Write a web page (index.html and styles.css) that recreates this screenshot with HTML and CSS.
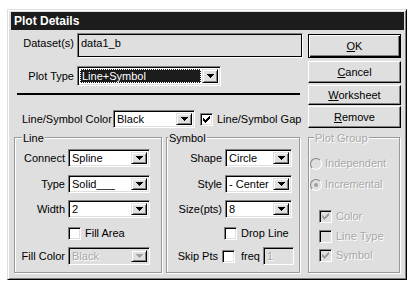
FILE: index.html
```html
<!DOCTYPE html>
<html>
<head>
<meta charset="utf-8">
<title>Plot Details</title>
<link rel="stylesheet" href="styles.css">
</head>
<body>
<div class="window">
  <div class="titlebar">Plot Details</div>
  <div class="top">
    <div class="left">
      <div class="row row-dataset">
        <span class="lbl-main lbl-ds">Dataset(s)</span>
        <div class="static">data1_b</div>
      </div>
      <div class="row row-plottype">
        <span class="lbl-main">Plot Type</span>
        <div class="combo combo-plottype">
          <div class="combo-text selected">Line+Symbol</div>
          <div class="arrow"><svg width="7" height="4" viewBox="0 0 7 4"><path d="M0 0h7v1h-1v1h-1v1h-1v1h-1v-1h-1v-1h-1v-1h-1z"/></svg></div>
        </div>
      </div>
      <div class="sep"></div>
      <div class="row row-color">
        <span class="lbl-color">Line/Symbol Color</span>
        <div class="combo combo-color">
          <div class="combo-text">Black</div>
          <div class="arrow"><svg width="7" height="4" viewBox="0 0 7 4"><path d="M0 0h7v1h-1v1h-1v1h-1v1h-1v-1h-1v-1h-1v-1h-1z"/></svg></div>
        </div>
        <span class="check checked gap-check"><svg width="7" height="7" viewBox="0 0 7 7"><path d="M0 2L2 4L6 0H7V2L2 7L0 5Z"/></svg></span>
        <span class="check-label">Line/Symbol Gap</span>
      </div>
    </div>
    <div class="buttons">
      <div class="btn btn-default btn-ok"><span><u>O</u>K</span></div>
      <div class="btn btn-cancel"><span><u>C</u>ancel</span></div>
      <div class="btn btn-ws"><span><u>W</u>orksheet</span></div>
      <div class="btn btn-remove"><span><u>R</u>emove</span></div>
    </div>
  </div>

  <div class="groups">
    <div class="group g-line">
      <div class="gtitle gt-line">Line</div>
      <div class="frow r-first">
        <span class="flbl">Connect</span>
        <div class="combo combo-l">
          <div class="combo-text">Spline</div>
          <div class="arrow"><svg width="7" height="4" viewBox="0 0 7 4"><path d="M0 0h7v1h-1v1h-1v1h-1v1h-1v-1h-1v-1h-1v-1h-1z"/></svg></div>
        </div>
      </div>
      <div class="frow r-second">
        <span class="flbl">Type</span>
        <div class="combo combo-l">
          <div class="combo-text">Solid___</div>
          <div class="arrow"><svg width="7" height="4" viewBox="0 0 7 4"><path d="M0 0h7v1h-1v1h-1v1h-1v1h-1v-1h-1v-1h-1v-1h-1z"/></svg></div>
        </div>
      </div>
      <div class="frow r-third">
        <span class="flbl">Width</span>
        <div class="combo combo-l">
          <div class="combo-text">2</div>
          <div class="arrow"><svg width="7" height="4" viewBox="0 0 7 4"><path d="M0 0h7v1h-1v1h-1v1h-1v1h-1v-1h-1v-1h-1v-1h-1z"/></svg></div>
        </div>
      </div>
      <div class="crow r-check fill-area">
        <span class="check"></span>
        <span class="check-label">Fill Area</span>
      </div>
      <div class="frow r-last">
        <span class="flbl">Fill Color</span>
        <div class="combo combo-l disabled">
          <div class="combo-text">Black</div>
          <div class="arrow"><svg width="7" height="4" viewBox="0 0 7 4"><path d="M0 0h7v1h-1v1h-1v1h-1v1h-1v-1h-1v-1h-1v-1h-1z"/></svg></div>
        </div>
      </div>
    </div>

    <div class="group g-symbol">
      <div class="gtitle gt-symbol">Symbol</div>
      <div class="frow r-first">
        <span class="flbl slbl">Shape</span>
        <div class="combo combo-s">
          <div class="combo-text">Circle</div>
          <div class="arrow"><svg width="7" height="4" viewBox="0 0 7 4"><path d="M0 0h7v1h-1v1h-1v1h-1v1h-1v-1h-1v-1h-1v-1h-1z"/></svg></div>
        </div>
      </div>
      <div class="frow r-second">
        <span class="flbl slbl">Style</span>
        <div class="combo combo-s">
          <div class="combo-text">- Center</div>
          <div class="arrow"><svg width="7" height="4" viewBox="0 0 7 4"><path d="M0 0h7v1h-1v1h-1v1h-1v1h-1v-1h-1v-1h-1v-1h-1z"/></svg></div>
        </div>
      </div>
      <div class="frow r-third">
        <span class="flbl slbl">Size(pts)</span>
        <div class="combo combo-s">
          <div class="combo-text">8</div>
          <div class="arrow"><svg width="7" height="4" viewBox="0 0 7 4"><path d="M0 0h7v1h-1v1h-1v1h-1v1h-1v-1h-1v-1h-1v-1h-1z"/></svg></div>
        </div>
      </div>
      <div class="crow r-check drop-line">
        <span class="check"></span>
        <span class="check-label">Drop Line</span>
      </div>
      <div class="frow r-last">
        <span class="skip-lbl">Skip Pts</span>
        <span class="check skip-check"></span>
        <span class="freq-lbl">freq</span>
        <div class="field disabled">1</div>
      </div>
    </div>

    <div class="group g-plot">
      <div class="gtitle gt-plot dis-text">Plot Group</div>
      <div class="crow radio-row r-indep">
        <span class="radio"></span>
        <span class="radio-label dis-text">Independent</span>
      </div>
      <div class="crow radio-row r-incr">
        <span class="radio on"></span>
        <span class="radio-label dis-text">Incremental</span>
      </div>
      <div class="crow pg-check pg-color">
        <span class="check checked dis"><svg width="7" height="7" viewBox="0 0 7 7"><path d="M0 2L2 4L6 0H7V2L2 7L0 5Z"/></svg></span>
        <span class="check-label dis-text">Color</span>
      </div>
      <div class="crow pg-check pg-ltype">
        <span class="check dis"></span>
        <span class="check-label dis-text">Line Type</span>
      </div>
      <div class="crow pg-check pg-symbol">
        <span class="check checked dis"><svg width="7" height="7" viewBox="0 0 7 7"><path d="M0 2L2 4L6 0H7V2L2 7L0 5Z"/></svg></span>
        <span class="check-label dis-text">Symbol</span>
      </div>
    </div>
  </div>
</div>
</body>
</html>
```

FILE: styles.css
```css
* { box-sizing: border-box; }

body {
  margin: 0;
  padding: 9px 0 0 7px;
  background: #fff;
  font-family: "Liberation Sans", Arial, sans-serif;
  font-size: 11px;
  line-height: 13px;
  color: #000;
}

.window {
  width: 400px;
  height: 271px;
  background: #dfdfdf;
  border: 1px solid;
  border-color: #dfdfdf #000 #000 #dfdfdf;
  box-shadow: inset 1px 1px 0 #fff, inset -1px -1px 0 #808080;
  padding: 2px 2px 0 3px;
}

.titlebar {
  height: 18px;
  background: #1c1c1c;
  color: #fff;
  font-weight: bold;
  font-size: 12px;
  line-height: 18px;
  padding-left: 3px;
}

.top {
  display: flex;
  align-items: flex-start;
}

.left {
  margin-left: 3px;
  width: 289px;
}

.row {
  display: flex;
  align-items: center;
}

.row-dataset {
  margin-top: 3px;
  height: 25px;
  align-items: flex-start;
}

.lbl-main {
  width: 60px;
  margin-right: 3px;
  text-align: right;
  white-space: nowrap;
}

.lbl-ds { padding-top: 4px; }

.static {
  width: 226px;
  height: 25px;
  border: 1px solid;
  border-color: #808080 #fff #fff #808080;
  box-shadow: inset 0 0 0 1px #000;
  padding: 3px 0 0 3px;
}

.row-plottype {
  margin-top: 8px;
  height: 20px;
}

.combo {
  display: flex;
  height: 18px;
  border: 1px solid;
  border-color: #808080 #fff #fff #808080;
  box-shadow: inset 1px 1px 0 #000, inset -1px -1px 0 #dfdfdf;
  background: #fff;
  padding: 2px;
}

.combo-text {
  flex: 1;
  display: flex;
  align-items: center;
  padding-left: 1px;
  white-space: nowrap;
  overflow: hidden;
}

.combo-plottype {
  width: 144px;
  height: 20px;
}

.combo-text.selected {
  background: #1c1c1c;
  color: #fff;
  outline: 1px dotted #fff;
  outline-offset: -1px;
  padding-left: 2px;
  margin-right: 1px;
}

.arrow {
  width: 16px;
  display: flex;
  align-items: center;
  justify-content: center;
  background: #dfdfdf;
  border: 1px solid;
  border-color: #dfdfdf #000 #000 #dfdfdf;
  box-shadow: inset 1px 1px 0 #fff, inset -1px -1px 0 #808080;
}

.arrow svg { display: block; fill: #000; shape-rendering: crispEdges; }

.combo.disabled { background: #dfdfdf; }
.combo.disabled .combo-text { color: #a8a8a8; text-shadow: 1px 1px 0 #fff; }
.combo.disabled .arrow svg { fill: #a0a0a0; }

.sep {
  margin: 7px 0 0 3px;
  width: 283px;
  height: 2px;
  background: #000;
}

.row-color {
  margin-top: 15px;
  height: 18px;
  padding-left: 8px;
}

.lbl-color {
  width: 91px;
  white-space: nowrap;
}

.combo-color { width: 82px; }

.check {
  width: 13px;
  height: 13px;
  flex: none;
  display: flex;
  align-items: center;
  justify-content: center;
  background: #fff;
  border: 1px solid;
  border-color: #808080 #fff #fff #808080;
  box-shadow: inset 1px 1px 0 #000, inset -1px -1px 0 #dfdfdf;
}

.check svg { display: block; fill: #000; shape-rendering: crispEdges; }

.check.dis { background: #dfdfdf; }
.check.dis svg { fill: #a0a0a0; }

.gap-check { margin-left: 5px; }

.check-label {
  margin-left: 4px;
  white-space: nowrap;
}

.buttons {
  margin-left: 5px;
  margin-top: 4px;
  width: 93px;
}

.btn {
  display: flex;
  align-items: center;
  justify-content: center;
  height: 22px;
  border: 1px solid;
  border-color: #fff #000 #000 #fff;
  box-shadow: inset -1px -1px 0 #808080, inset 1px 1px 0 #dfdfdf;
}

.btn-default {
  height: 24px;
  border: 1px solid #000;
  box-shadow: inset 1px 1px 0 #fff, inset -1px -1px 0 #000, inset -2px -2px 0 #808080;
}

.btn-cancel { margin-top: 3px; }
.btn-ws { margin-top: 2px; height: 20px; }
.btn-remove { margin-top: 1px; }

.groups {
  display: flex;
  margin-left: 3px;
  margin-top: 9px;
}

.group {
  height: 136px;
  border: 1px solid #999;
  box-shadow: inset 1px 1px 0 #fff, 1px 1px 0 #fff;
}

.g-line { width: 148px; }
.g-symbol { width: 134px; margin-left: 4px; }
.g-plot { width: 92px; margin-left: 8px; }

.gtitle {
  width: fit-content;
  margin-top: -6px;
  padding: 0 1px;
  background: #dfdfdf;
  white-space: nowrap;
}

.gt-line { margin-left: 7px; }
.gt-symbol { margin-left: 1px; }
.gt-plot { margin-left: 5px; }

.dis-text {
  color: #a8a8a8;
  text-shadow: 1px 1px 0 #fff;
}

.frow {
  display: flex;
  align-items: center;
  height: 18px;
}

.crow {
  display: flex;
  align-items: center;
  height: 13px;
}

.r-first { margin-top: 4px; }
.r-second { margin-top: 8px; }
.r-third { margin-top: 7px; }
.r-check { margin-top: 9px; }
.r-last { margin-top: 7px; }

.flbl {
  width: 50px;
  margin-right: 3px;
  text-align: right;
  white-space: nowrap;
}

.slbl { width: 55px; }

.combo-l { width: 82px; }
.combo-s { width: 67px; }

.fill-area .check { margin-left: 53px; }
.drop-line .check { margin-left: 57px; }

.skip-lbl {
  width: 51px;
  text-align: right;
  white-space: nowrap;
}

.skip-check { margin-left: 4px; }

.freq-lbl { margin-left: 6px; }

.field {
  margin-left: 3px;
  width: 31px;
  height: 18px;
  border: 1px solid;
  border-color: #808080 #fff #fff #808080;
  box-shadow: inset 1px 1px 0 #000, inset -1px -1px 0 #dfdfdf;
  padding: 2px 0 0 3px;
}

.field.disabled {
  background: #dfdfdf;
  color: #a8a8a8;
  text-shadow: 1px 1px 0 #fff;
}

.radio {
  width: 12px;
  height: 12px;
  flex: none;
  margin-left: 1px;
  border-radius: 50%;
  border: 1px solid;
  border-color: #808080 #fff #fff #808080;
  background: #dfdfdf;
  display: flex;
  align-items: center;
  justify-content: center;
}

.radio.on::after {
  content: "";
  width: 4px;
  height: 4px;
  border-radius: 50%;
  background: #a0a0a0;
}

.radio-label { margin-left: 3px; white-space: nowrap; }

.r-indep { margin-top: 12px; }
.r-incr { margin-top: 8px; }

.pg-check .check { margin-left: 10px; }
.pg-color { margin-top: 19px; }
.pg-ltype { margin-top: 7px; }
.pg-symbol { margin-top: 6px; }
```
